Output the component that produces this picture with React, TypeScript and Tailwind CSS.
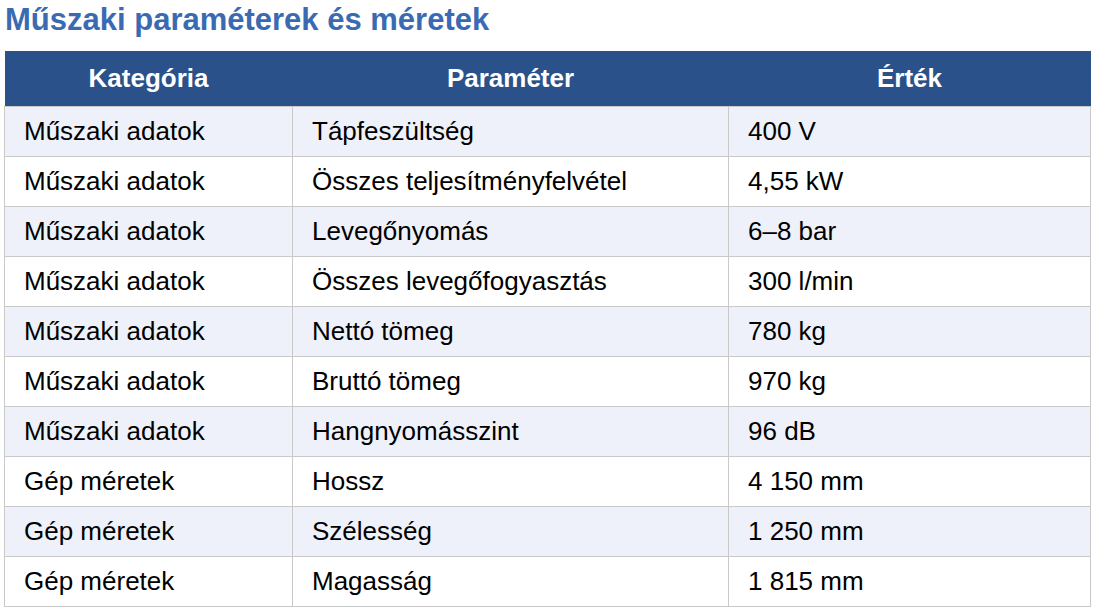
import React from "react";

const rows: [string, string, string][] = [
  ["Műszaki adatok", "Tápfeszültség", "400 V"],
  ["Műszaki adatok", "Összes teljesítményfelvétel", "4,55 kW"],
  ["Műszaki adatok", "Levegőnyomás", "6–8 bar"],
  ["Műszaki adatok", "Összes levegőfogyasztás", "300 l/min"],
  ["Műszaki adatok", "Nettó tömeg", "780 kg"],
  ["Műszaki adatok", "Bruttó tömeg", "970 kg"],
  ["Műszaki adatok", "Hangnyomásszint", "96 dB"],
  ["Gép méretek", "Hossz", "4 150 mm"],
  ["Gép méretek", "Szélesség", "1 250 mm"],
  ["Gép méretek", "Magasság", "1 815 mm"],
];

export default function App() {
  return (
    <div className="bg-white w-[1095px] h-[610px] overflow-hidden pl-[4px] pt-[2px] font-['Liberation_Sans',Arial,sans-serif]">
      <h2 className="text-[31px] leading-[36px] font-bold text-[#3a6bb2] pl-[1px] mb-[13px]">
        Műszaki paraméterek és méretek
      </h2>
      <table className="table-fixed border-collapse w-[1086px]">
        <colgroup>
          <col className="w-[288px]" />
          <col className="w-[436px]" />
          <col className="w-[362px]" />
        </colgroup>
        <thead>
          <tr className="bg-[#2a5189] text-white h-[55px]">
            <th className="text-[26px] font-bold text-center p-0">Kategória</th>
            <th className="text-[26px] font-bold text-center p-0">Paraméter</th>
            <th className="text-[26px] font-bold text-center p-0">Érték</th>
          </tr>
        </thead>
        <tbody>
          {rows.map((r, i) => (
            <tr key={i} className={`h-[50px] ${i % 2 === 0 ? "bg-[#eef1f9]" : "bg-white"}`}>
              {r.map((c, j) => (
                <td
                  key={j}
                  className="border border-[#c9c9c9] text-[26px] leading-[30px] text-black pl-[19px] py-0 align-middle"
                >
                  {c}
                </td>
              ))}
            </tr>
          ))}
        </tbody>
      </table>
    </div>
  );
}
